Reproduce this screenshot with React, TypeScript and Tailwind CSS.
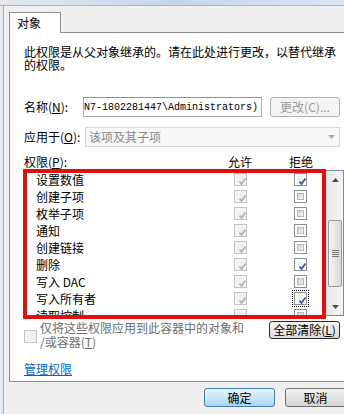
import React from 'react';

interface PermRow {
  name: string;
  deny?: boolean;
  focus?: boolean;
}

const rows: PermRow[] = [
  { name: '设置数值', deny: true },
  { name: '创建子项' },
  { name: '枚举子项' },
  { name: '通知' },
  { name: '创建链接' },
  { name: '删除', deny: true },
  { name: '写入 DAC' },
  { name: '写入所有者', deny: true, focus: true },
  { name: '读取控制' },
];

function Check({ color }: { color: string }) {
  return (
    <svg width="9" height="9" viewBox="0 0 9 9" className="absolute left-[1px] top-[1px]">
      <path d="M1.5 4.5 L3.5 7 L7.5 1.5" fill="none" stroke={color} strokeWidth="1.8" />
    </svg>
  );
}

function Box({ checked, disabled, focus }: { checked?: boolean; disabled?: boolean; focus?: boolean }) {
  return (
    <span className="relative inline-block w-[13px] h-[13px] shrink-0">
      <span
        className={
          disabled
            ? 'absolute inset-0 border border-[#c3c3c3] bg-[#f4f4f4] p-[2px]'
            : 'absolute inset-0 border border-[#8e8f8f] bg-white p-[2px]'
        }
      >
        <span
          className={
            disabled
              ? 'relative block w-full h-full bg-[#f0f0f0]'
              : checked
              ? 'relative block w-full h-full bg-gradient-to-br from-[#e8ecf2] to-[#fafafa]'
              : 'relative block w-full h-full border border-[#b6b9bd] bg-gradient-to-br from-[#cfd2d6] to-[#f4f4f4]'
          }
        >
          {checked && <Check color={disabled ? '#b4b4b4' : '#3d5499'} />}
        </span>
      </span>
      {focus && <span className="absolute -inset-[2px] border border-dotted border-black" />}
    </span>
  );
}

function ScrollArrow({ up }: { up?: boolean }) {
  return (
    <div className="h-[17px] flex items-center justify-center">
      <svg width="7" height="4" viewBox="0 0 7 4">
        <path d={up ? 'M0 4 L3.5 0 L7 4 Z' : 'M0 0 L3.5 4 L7 0 Z'} fill="#4d4d4d" />
      </svg>
    </div>
  );
}

export default function App() {
  return (
    <div className="w-[344px] h-[414px] overflow-hidden bg-[#f0f0f0] flex flex-col font-['Noto_Sans_CJK_SC',sans-serif] text-[12px] text-black">
      {/* window frame top */}
      <div className="h-[6px] shrink-0 bg-gradient-to-r from-[#e4e9ef] via-[#c6d6ea] to-[#d9e5f2] border-b border-[#a9b6c6]" />
      <div className="flex flex-1">
        <div className="w-[4px] shrink-0 bg-[#e2e8ef] border-r border-[#a4adb9]" />
        <div className="flex flex-col">
          {/* tab strip */}
          <div className="pt-[6px] pl-[5px] flex">
            <div className="relative z-10 w-[52px] h-[21px] -mb-px bg-white border border-b-0 border-[#898c95] pl-[7px] leading-[20px]">
              对象
            </div>
          </div>

          {/* tab panel */}
          <div className="ml-[5px] w-[345px] h-[350px] bg-white border border-[#898c95] pl-[14px] pt-[12px]">
            <p className="w-[316px] leading-[13px]">
              此权限是从父对象继承的。请在此处进行更改，以替代继承的权限。
            </p>

            <div className="mt-[26px] flex items-center h-[20px]">
              <span className="w-[59px]">
                名称(<span className="underline">N</span>):
              </span>
              <div className="w-[179px] h-[20px] border border-[#abadb3] border-t-[#8e9093] bg-white flex justify-end items-center overflow-hidden pr-[3px]">
                <span className="whitespace-nowrap font-['Liberation_Mono',monospace] text-[10px]">
                  (WIN7-1802281447\Administrators)
                </span>
              </div>
              <button className="ml-[8px] w-[70px] h-[20px] rounded-[3px] border border-[#adb2b5] bg-[#f4f4f4] text-[#9a9a9a] leading-[18px]">
                更改(C)...
              </button>
            </div>

            <div className="mt-[10px] flex items-center h-[20px]">
              <span className="w-[61px]">
                应用于(<span className="underline">O</span>):
              </span>
              <div className="w-[255px] h-[20px] border border-[#d9d9d9] bg-[#f7f7f7] flex items-center pl-[3px] pr-[4px] text-[#8a8a8a]">
                <span className="flex-1">该项及其子项</span>
                <svg width="7" height="4" viewBox="0 0 7 4">
                  <path d="M0 0 L3.5 4 L7 0 Z" fill="#a9a9a9" />
                </svg>
              </div>
            </div>

            <div className="mt-[8px] flex h-[13px] leading-[13px]">
              <span className="w-[204px]">
                权限(<span className="underline">P</span>):
              </span>
              <span className="w-[61px]">允许</span>
              <span>拒绝</span>
            </div>

            <div className="relative mt-[2px] -ml-px w-[321px] h-[146px] border border-[#828790] flex bg-white">
              <div className="w-[302px] h-[144px] overflow-hidden">
                {rows.map((r) => (
                  <div key={r.name} className="h-[17px] flex items-center pl-[12px]">
                    <span className="flex-1 leading-[17px] whitespace-nowrap">{r.name}</span>
                    <Box checked disabled />
                    <span className="w-[47px]" />
                    <Box checked={r.deny} focus={r.focus} />
                    <span className="w-[19px]" />
                  </div>
                ))}
              </div>
              <div className="w-[17px] h-[144px] flex flex-col bg-gradient-to-r from-[#e7e7e7] to-[#f5f5f5] border-l border-[#e3e3e3]">
                <ScrollArrow up />
                <div className="flex-1 relative">
                  <div className="absolute left-[1px] right-[1px] top-[32px] h-[67px] rounded-[2px] border border-[#9a9a9a] bg-gradient-to-r from-[#f3f3f3] to-[#d9d9d9] flex flex-col items-center justify-center gap-[1px]">
                    <span className="block w-[7px] h-px bg-[#7a7a7a]" />
                    <span className="block w-[7px] h-px bg-[#7a7a7a]" />
                    <span className="block w-[7px] h-px bg-[#7a7a7a]" />
                    <span className="block w-[7px] h-px bg-[#7a7a7a]" />
                  </div>
                </div>
                <ScrollArrow />
              </div>
              {/* red annotation box */}
              <div className="absolute left-[-1px] top-[-2px] w-[303px] h-[150px] border-[4px] border-[#dd1111]" />
            </div>

            <div className="mt-[5px] flex items-start">
              <span className="mt-[8px]">
                <Box disabled />
              </span>
              <span className="ml-[3px] w-[210px] leading-[14px] text-[#6d6d6d] whitespace-nowrap">
                仅将这些权限应用到此容器中的对象和
                <br />
                /或容器(<span className="underline">T</span>)
              </span>
              <button className="ml-[19px] w-[71px] h-[18px] rounded-[3px] border border-[#2b2b2b] bg-gradient-to-b from-[#f4f4f4] to-[#dcdcdc] leading-[16px] whitespace-nowrap">
                全部清除(<span className="underline">L</span>)
              </button>
            </div>

            <div className="mt-[13px] leading-[13px]">
              <span className="text-[#0066cc] underline">管理权限</span>
            </div>
          </div>

          {/* dialog buttons */}
          <div className="mt-[6px] ml-[200px] flex gap-[10px]">
            <button className="w-[71px] h-[19px] shrink-0 rounded-[3px] border border-[#3c7fb1] bg-gradient-to-b from-[#e9f5fc] to-[#a9d6f2] leading-[17px]">
              确定
            </button>
            <button className="w-[71px] h-[19px] shrink-0 rounded-[3px] border border-[#707070] bg-gradient-to-b from-[#f2f2f2] to-[#d4d4d4] leading-[17px] pr-[10px]">
              取消
            </button>
          </div>
        </div>
      </div>
    </div>
  );
}
